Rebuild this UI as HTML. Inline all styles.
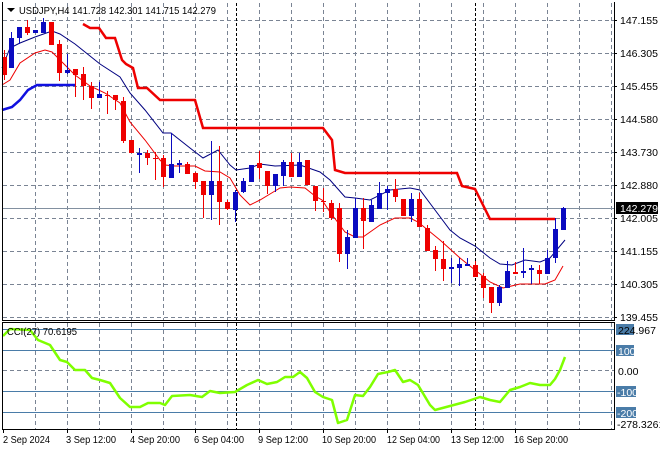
<!DOCTYPE html>
<html><head><meta charset="utf-8"><style>
html,body{margin:0;padding:0;background:#fff;width:660px;height:450px;overflow:hidden}
svg{display:block}
text{font-family:"Liberation Sans",sans-serif;font-size:10.5px;fill:#000}
</style></head><body>
<svg width="660" height="450" viewBox="0 0 660 450" xmlns="http://www.w3.org/2000/svg">
<rect width="660" height="450" fill="#fff"/>
<g stroke="#7a8494" stroke-width="1" stroke-dasharray="4,3" shape-rendering="crispEdges">
<path d="M3 20.5H614M3 53.5H614M3 86.5H614M3 119.5H614M3 152.5H614M3 185.5H614M3 218.5H614M3 251.5H614M3 284.5H614M3 317.5H614M3 370.5H614"/>
<path d="M35.5 3V320M67.5 3V320M99.5 3V320M131.5 3V320M163.5 3V320M195.5 3V320M227.5 3V320M259.5 3V320M291.5 3V320M323.5 3V320M355.5 3V320M387.5 3V320M419.5 3V320M451.5 3V320M483.5 3V320M515.5 3V320M547.5 3V320M579.5 3V320M611.5 3V320"/>
<path d="M35.5 323V429M67.5 323V429M99.5 323V429M131.5 323V429M163.5 323V429M195.5 323V429M227.5 323V429M259.5 323V429M291.5 323V429M323.5 323V429M355.5 323V429M387.5 323V429M419.5 323V429M451.5 323V429M483.5 323V429M515.5 323V429M547.5 323V429M579.5 323V429M611.5 323V429"/>
</g>
<g stroke="#000" stroke-dasharray="3,2" shape-rendering="crispEdges">
<path d="M236.5 3V429M475.5 3V429"/>
</g>
<g stroke="#4a7ca8" shape-rendering="crispEdges">
<path d="M3 329.5H614M3 350.5H614M3 391.5H614M3 412.5H614"/>
</g>
<line x1="3" y1="208.5" x2="614" y2="208.5" stroke="#8290a0" shape-rendering="crispEdges"/>
<polyline fill="none" stroke="#1010e0" stroke-width="2.5" points="2,110 12,107 20,100 28,90 37,85 75,85"/>
<polyline fill="none" stroke="#ee0000" stroke-width="2.5" points="83,24 90,28 99,28 106,38 115,38 122,60 126,64 133,68 138,88 147,88 160,100 195,100 203,128 323,128 332,140 335,170 345,173 457,173 462,186 475,189 482,203 490,219 555,219"/>
<polyline fill="none" stroke="#000080" stroke-width="1" points="2,68 10,48 20,43 35,37 52,31 60,34 75,44 90,56 100,64 120,77 130,93 145,110 163,133 171,133 190,148 203,158 218,150 230,165 236,170 250,168 260,164 275,166 300,165 320,172 330,180 345,197 355,198 370,200 390,190 410,188 420,190 435,210 450,230 460,238 475,246 490,258 500,264 512,265 525,260 540,262 550,258 565,240"/>
<polyline fill="none" stroke="#ee0000" stroke-width="1" points="2,85 10,80 20,63 35,53 45,50 52,52 62,62 75,75 90,86 105,93 120,103 130,122 145,140 160,160 165,165 175,166 195,166 205,171 220,172 230,178 240,195 250,205 260,200 270,194 280,188 290,187 305,188 315,196 322,200 330,212 345,232 355,237 363,237 380,225 395,218 410,218 418,222 440,240 460,258 475,270 490,282 503,288 520,284 545,284 555,280 563,266"/>
<g shape-rendering="crispEdges">
<path fill="none" stroke="#ee0000" d="M4.5 50V80M27.5 20V35M51.5 22V45M59.5 40V81M75.5 69V97M83.5 67V100M91.5 82V109M107.5 91V114M115.5 95V110M123.5 97V143M131.5 140V153M147.5 150V165M155.5 152V180M163.5 155V187M187.5 162V174M195.5 172V189M203.5 181V218M219.5 146V225M227.5 200V210M259.5 151V179M267.5 171V194M291.5 153V177M307.5 160V185M315.5 186V211M323.5 188V212M331.5 200V220M339.5 203V262M363.5 198V249M395.5 179V202M403.5 199V216M419.5 193V227M427.5 225V251M435.5 246V271M443.5 241V281M475.5 261V277M483.5 273V298M491.5 287V313M515.5 262V274M539.5 265V284"/>
<path fill="#ee0000" d="M2 57h5v18h-5zM25 27h5v6h-5zM49 22h5v23h-5zM57 44h5v29h-5zM73 69h5v6h-5zM81 74h5v12h-5zM89 86h5v12h-5zM105 95h5v1h-5zM113 95h5v5h-5zM121 101h5v40h-5zM129 140h5v13h-5zM145 153h5v5h-5zM153 158h5v1h-5zM161 158h5v19h-5zM185 164h5v10h-5zM193 173h5v9h-5zM201 181h5v14h-5zM217 181h5v21h-5zM225 202h5v7h-5zM257 163h5v5h-5zM265 171h5v15h-5zM289 162h5v15h-5zM305 160h5v25h-5zM313 186h5v15h-5zM321 201h5v1h-5zM329 203h5v15h-5zM337 208h5v46h-5zM361 208h5v13h-5zM393 189h5v8h-5zM401 199h5v17h-5zM417 199h5v28h-5zM425 228h5v23h-5zM433 250h5v9h-5zM441 259h5v10h-5zM473 265h5v12h-5zM481 276h5v12h-5zM489 287h5v16h-5zM513 272h5v2h-5zM537 270h5v4h-5z"/>
<path fill="none" stroke="#0a0ac0" d="M11.5 32V68M19.5 27V44M35.5 30V33M43.5 18V33M67.5 54V74M99.5 82V98M139.5 148V173M171.5 133V178M179.5 160V173M211.5 141V220M235.5 190V222M243.5 178V193M251.5 165V182M275.5 174V192M283.5 160V186M299.5 153V177M347.5 230V269M355.5 198V238M371.5 200V222M379.5 182V209M387.5 186V210M411.5 193V222M451.5 258V283M459.5 258V286M467.5 258V266M499.5 285V306M507.5 261V288M523.5 248V278M531.5 265V284M547.5 250V274M555.5 218V263M563.5 207V230"/>
<path fill="#0a0ac0" d="M9 38h5v30h-5zM17 27h5v11h-5zM33 30h5v3h-5zM41 22h5v11h-5zM65 70h5v3h-5zM97 94h5v4h-5zM137 153h5v2h-5zM169 164h5v14h-5zM177 163h5v2h-5zM209 181h5v14h-5zM233 192h5v18h-5zM241 181h5v11h-5zM249 165h5v17h-5zM273 174h5v12h-5zM281 162h5v14h-5zM297 162h5v15h-5zM345 237h5v17h-5zM353 208h5v30h-5zM369 205h5v17h-5zM377 193h5v16h-5zM385 189h5v4h-5zM409 199h5v17h-5zM449 267h5v2h-5zM457 264h5v4h-5zM465 264h5v2h-5zM497 287h5v16h-5zM505 271h5v17h-5zM521 271h5v2h-5zM529 268h5v2h-5zM545 258h5v16h-5zM553 229h5v29h-5zM561 208h5v22h-5z"/>
</g>
<polyline fill="none" stroke="#7fff00" stroke-width="2.5" stroke-linejoin="round" points="3,336 10,329 30,330 38,340 50,345 60,360 67,362 75,370 85,370 92,378 100,380 110,383 120,398 130,407 140,407 148,403 160,403 165,405 172,396 190,395 202,397 210,391 220,393 235,392 247,385 258,380 267,384 277,382 285,377 293,377 300,372 307,378 315,392 323,397 332,400 338,423 347,420 355,395 363,396 370,387 378,374 388,372 395,370 403,382 410,380 418,385 424,395 430,405 435,410 450,406 465,402 480,397 490,400 500,402 510,390 520,387 530,383 540,385 550,385 555,379 560,370 565,357"/>
<g fill="none" stroke="#000" shape-rendering="crispEdges">
<path d="M2.5 2V320.5H614.5V2"/>
<path d="M2.5 322.5H614.5V429.5H2.5Z"/>
</g>
<g stroke="#000" shape-rendering="crispEdges">
<path d="M614 20.5h3M614 53.5h3M614 86.5h3M614 119.5h3M614 152.5h3M614 185.5h3M614 218.5h3M614 251.5h3M614 284.5h3M614 317.5h3"/>
<path d="M3.5 429v4M67.5 429v4M131.5 429v4M195.5 429v4M259.5 429v4M323.5 429v4M387.5 429v4M451.5 429v4M515.5 429v4"/>
</g>
<path d="M7 8h8l-4 4z" fill="#000"/>
<text x="19" y="14" textLength="197" lengthAdjust="spacingAndGlyphs">USDJPY,H4  141.728 142.301 141.715 142.279</text>
<text x="7" y="335" textLength="70" lengthAdjust="spacingAndGlyphs">CCI(27) 70.6195</text>
<g>
<text x="620" y="24">147.155</text><text x="620" y="57">146.305</text><text x="620" y="90">145.455</text>
<text x="620" y="123">144.580</text><text x="620" y="156">143.730</text><text x="620" y="189">142.880</text>
<text x="620" y="222">142.005</text><text x="620" y="255">141.155</text><text x="620" y="288">140.305</text><text x="620" y="321">139.455</text>
</g>
<rect x="616" y="202" width="42" height="12" fill="#000"/>
<text x="620" y="212" style="fill:#fff">142.279</text>
<rect x="616" y="324" width="18" height="11" fill="#4a7ca8"/>
<text x="618" y="334">224.967</text>
<rect x="616" y="345" width="18" height="11" fill="#4a7ca8"/><text x="618" y="355" style="fill:#fff">100</text>
<text x="618" y="375">0.00</text>
<rect x="616" y="386" width="20" height="11" fill="#4a7ca8"/><text x="617" y="396" style="fill:#fff">-100</text>
<rect x="616" y="407" width="20" height="11" fill="#4a7ca8"/><text x="617" y="417" style="fill:#fff">-200</text>
<text x="617" y="428">-278.3261</text>
<g>
<text x="3" y="443" textLength="47" lengthAdjust="spacingAndGlyphs">2 Sep 2024</text>
<text x="66" y="443" textLength="50" lengthAdjust="spacingAndGlyphs">3 Sep 12:00</text>
<text x="130" y="443" textLength="50" lengthAdjust="spacingAndGlyphs">4 Sep 20:00</text>
<text x="194" y="443" textLength="50" lengthAdjust="spacingAndGlyphs">6 Sep 04:00</text>
<text x="258" y="443" textLength="50" lengthAdjust="spacingAndGlyphs">9 Sep 12:00</text>
<text x="322" y="443" textLength="54" lengthAdjust="spacingAndGlyphs">10 Sep 20:00</text>
<text x="387" y="443" textLength="53" lengthAdjust="spacingAndGlyphs">12 Sep 04:00</text>
<text x="451" y="443" textLength="53" lengthAdjust="spacingAndGlyphs">13 Sep 12:00</text>
<text x="514" y="443" textLength="54" lengthAdjust="spacingAndGlyphs">16 Sep 20:00</text>
</g>
</svg>
</body></html>
